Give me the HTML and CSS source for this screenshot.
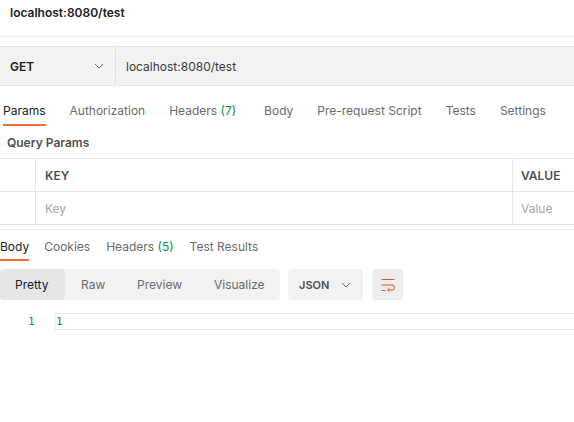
FILE: index.html
```html
<!DOCTYPE html>
<html>
<head>
<meta charset="utf-8">
<link rel="stylesheet" href="styles.css">
</head>
<body>
<div class="title">localhost:8080/test</div>
<div class="reqbar">
  <div class="method"><span>GET</span>
    <svg class="chev" width="10" height="6" viewBox="0 0 10 6"><path d="M1 1l4 4 4-4" fill="none" stroke="#6b6b6b" stroke-width="1"/></svg>
  </div>
  <div class="url">localhost:8080/test</div>
</div>
<div class="tabs reqtabs">
  <div class="tab active">Params</div>
  <div class="tab">Authorization</div>
  <div class="tab">Headers <span class="cnt">(7)</span></div>
  <div class="tab body-tab">Body</div>
  <div class="tab">Pre-request Script</div>
  <div class="tab">Tests</div>
  <div class="tab">Settings</div>
</div>
<div class="qp">Query Params</div>
<div class="table">
  <div class="row head">
    <div class="c0"></div><div class="c1">KEY</div><div class="c2">VALUE</div>
  </div>
  <div class="row">
    <div class="c0"></div><div class="c1 ph">Key</div><div class="c2 ph">Value</div>
  </div>
</div>
<div class="pane-sep"></div>
<div class="tabs restabs">
  <div class="tab active">Body</div>
  <div class="tab">Cookies</div>
  <div class="tab">Headers <span class="cnt">(5)</span></div>
  <div class="tab">Test Results</div>
</div>
<div class="toolbar">
  <div class="seg">
    <div class="seg-item sel">Pretty</div>
    <div class="seg-item raw">Raw</div>
    <div class="seg-item prev">Preview</div>
    <div class="seg-item vis">Visualize</div>
  </div>
  <div class="json">JSON
    <svg width="10" height="6" viewBox="0 0 10 6"><path d="M1 1l4 4 4-4" fill="none" stroke="#6b6b6b" stroke-width="1"/></svg>
  </div>
  <div class="wrap">
    <svg width="16" height="14" viewBox="0 0 16 14"><path d="M1.5 1.5h13M1.5 7h10.5a2.5 2.5 0 0 1 0 5H8M1.5 12.5h4" fill="none" stroke="#d0562f" stroke-width="1"/><path d="M9.5 10.2L7.5 12l2 1.8" fill="none" stroke="#d0562f" stroke-width="1"/></svg>
  </div>
</div>
<div class="code">
  <div class="ln">1</div>
  <div class="line">1</div>
</div>
</body>
</html>
```
FILE: styles.css
```css
* { box-sizing: border-box; }
body {
  margin: 0;
  font-family: Inter, "Open Sans", sans-serif;
  font-size: 12px;
  color: #212121;
  background: #fff;
  width: 574px;
  height: 422px;
  overflow: hidden;
}
.title {
  font-weight: 600;
  padding: 5px 0 0 10px;
  height: 37px;
  border-bottom: 1px solid #ededed;
}
.reqbar {
  margin-top: 9px;
  height: 40px;
  display: flex;
  background: #f2f2f2;
  border-top: 1px solid #e6e6e6;
  border-bottom: 1px solid #e6e6e6;
}
.method {
  width: 116px;
  display: flex;
  align-items: center;
  justify-content: space-between;
  padding: 0 11px 0 10px;
  font-weight: 600;
  border-right: 1px solid #e0e0e0;
}
.url {
  display: flex;
  align-items: center;
  padding-left: 10px;
  color: #3a3a3a;
}
.tabs { display: flex; white-space: nowrap; }
.tab {
  color: #6b6b6b;
  position: relative;
}
.tab.active { color: #212121; }
.tab.active::after {
  content: "";
  position: absolute;
  left: 0; right: 0; bottom: 0;
  height: 2px;
  background: #f26b3a;
}
.cnt { color: #0f8a4a; }
.reqtabs { margin-top: 16px; padding-left: 3px; gap: 24px; }
.reqtabs .tab { height: 24px; line-height: 18px; }
.reqtabs .body-tab { margin-left: 4px; }
.qp {
  font-weight: 600;
  color: #505050;
  padding: 9px 0 0 7px;
  height: 32px;
}
.table { border-top: 1px solid #e6e6e6; }
.row {
  display: flex;
  height: 33px;
  border-bottom: 1px solid #e6e6e6;
}
.c0 { width: 36px; border-right: 1px solid #e6e6e6; }
.c1 { flex: 1; padding: 9px 0 0 9px; border-right: 1px solid #e6e6e6; }
.c2 { width: 61px; padding: 9px 0 0 8px; }
.head .c1, .head .c2 { font-weight: 600; color: #505050; }
.ph { color: #a6a6a6; }
.pane-sep { height: 5px; border-bottom: 1px solid #ededed; }
.restabs { margin-top: 7px; gap: 16px; padding-left: 0; }
.restabs .tab { height: 24px; line-height: 19px; }
.restabs .tab:nth-child(2) { margin-left: -1px; }
.toolbar {
  display: flex;
  margin-top: 8px;
  height: 31px;
}
.seg {
  display: flex;
  background: #f2f2f2;
  border-radius: 4px;
  width: 280px;
}
.seg-item {
  display: flex;
  align-items: center;
  padding-left: 15px;
  color: #6b6b6b;
  border-radius: 4px;
}
.seg-item.sel { background: #e6e6e6; color: #212121; width: 65px; }
.seg-item.raw { width: 57px; padding-left: 16px; }
.seg-item.prev { width: 77px; }
.seg-item.vis { width: 81px; }
.json {
  margin-left: 8px;
  width: 75px;
  background: #f2f2f2;
  border-radius: 4px;
  display: flex;
  align-items: center;
  gap: 12px;
  padding-left: 11px;
  font-weight: 600;
  font-size: 11px;
  color: #505050;
}
.wrap {
  margin-left: 9px;
  width: 31px;
  background: #ededed;
  border-radius: 4px;
  display: flex;
  align-items: center;
  justify-content: center;
}
.code {
  display: flex;
  margin-top: 13px;
  font-family: "DejaVu Sans Mono", monospace;
  font-size: 11px;
  color: #1a7f8e;
}
.ln { width: 55px; padding-left: 28px; line-height: 17px; }
.line {
  flex: 1;
  height: 17px;
  line-height: 15px;
  border-top: 1px solid #e8e8e8;
  border-bottom: 1px solid #e8e8e8;
  border-left: 1px solid #dff3f3;
}
```
